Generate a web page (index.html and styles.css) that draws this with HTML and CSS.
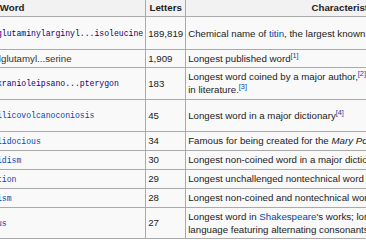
FILE: index.html
```html
<!DOCTYPE html>
<html>
<head>
<meta charset="utf-8">
<link rel="stylesheet" href="styles.css">
</head>
<body>
<table class="wikitable">
  <thead>
    <tr>
      <th class="c-word">Word</th>
      <th class="c-letters">Letters</th>
      <th class="c-char">Characteristics</th>
    </tr>
  </thead>
  <tbody>
    <tr class="h33">
      <td><a class="visited mono">Methionylthreonylthreonylglutaminylarginyl...isoleucine</a></td>
      <td>189,819</td>
      <td>Chemical name of <a class="link">titin</a>, the largest known protein</td>
    </tr>
    <tr>
      <td class="plain"><span class="pre">Methionylglutaminylarginyltyrosyl</span>glutamyl...serine</td>
      <td>1,909</td>
      <td>Longest published word<sup class="ref">[1]</sup></td>
    </tr>
    <tr>
      <td><a class="visited mono">Lopadotemachoselachogaleokranioleipsano...pterygon</a></td>
      <td>183</td>
      <td>Longest word coined by a major author,<sup class="ref">[2]</sup> the longest word ever to appear<br>in literature.<sup class="ref">[3]</sup></td>
    </tr>
    <tr class="h32">
      <td><a class="link mono">Pneumonoultramicroscopicsilicovolcanoconiosis</a></td>
      <td>45</td>
      <td>Longest word in a major dictionary<sup class="ref">[4]</sup></td>
    </tr>
    <tr>
      <td><a class="link mono">Supercalifragilisticexpialidocious</a></td>
      <td>34</td>
      <td>Famous for being created for the <i>Mary Poppins</i> film</td>
    </tr>
    <tr>
      <td><a class="link mono">Pseudopseudohypoparathyroidism</a></td>
      <td>30</td>
      <td>Longest non-coined word in a major dictionary</td>
    </tr>
    <tr>
      <td><a class="link mono">Floccinaucinihilipilification</a></td>
      <td>29</td>
      <td>Longest unchallenged nontechnical word</td>
    </tr>
    <tr>
      <td><a class="link mono">Antidisestablishmentarianism</a></td>
      <td>28</td>
      <td>Longest non-coined and nontechnical word</td>
    </tr>
    <tr>
      <td><a class="link mono">Honorificabilitudinitatibus</a></td>
      <td>27</td>
      <td>Longest word in <a class="link">Shakespeare</a>'s works; longest word in the English<br>language featuring alternating consonants and vowels</td>
    </tr>
  </tbody>
</table>
</body>
</html>
```

FILE: styles.css
```css
html, body {
  margin: 0;
  padding: 0;
  background: #ffffff;
  overflow: hidden;
}

body {
  width: 366px;
  height: 243px;
  font-family: "Liberation Sans", Arial, sans-serif;
  font-size: 9.7px;
  color: #222222;
}

.wikitable {
  border-collapse: collapse;
  background: #f9f9f9;
  border: 1px solid #aaaaaa;
  margin: -2px 0 0 -128px;
  line-height: 13px;
}

.wikitable th,
.wikitable td {
  border: 1px solid #aaaaaa;
  padding: 2px;
  white-space: nowrap;
  vertical-align: middle;
  text-align: left;
}

.wikitable th {
  background: #f2f2f2;
  font-weight: bold;
  text-align: center;
  color: #222222;
}

.wikitable th.c-word {
  padding-left: 8px;
}

.c-char {
  width: 296px;
}

.h33 {
  height: 33px;
}

.h32 {
  height: 32px;
}

.mono {
  font-family: "Liberation Mono", "Courier New", monospace;
  font-size: 8.15px;
}

.link {
  color: #0645ad;
}

.visited {
  color: #0b0080;
}

.plain {
  color: #333333;
}

.pre {
  display: inline-block;
  width: 126px;
  overflow: hidden;
  vertical-align: top;
  text-align: right;
  direction: rtl;
}

.ref {
  font-size: 0.75em;
  line-height: 1;
  vertical-align: super;
  color: #0645ad;
}

i {
  font-style: italic;
}
```
